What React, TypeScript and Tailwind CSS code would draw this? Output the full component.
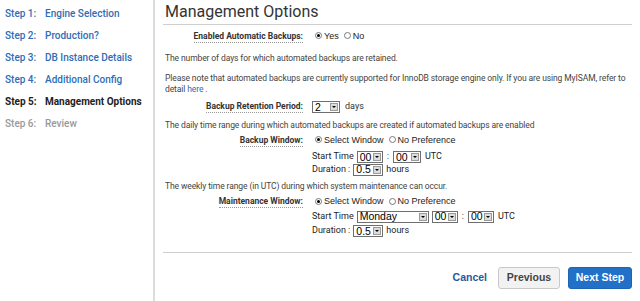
import React from "react";

const roboto = { fontFamily: "Roboto, 'Liberation Sans', sans-serif" };

function Sel({ v, cls }: { v: string; cls: string }) {
  return (
    <span className={"inline-flex items-center h-[12px] border border-[#6f6f6f] bg-white " + cls}>
      <span className="flex-1 pl-[2px] text-[10.5px] leading-none text-black font-['Liberation_Sans',sans-serif]">{v}</span>
      <span className="w-[8px] h-[8px] mr-[1px] bg-[#dcdcdc] border border-[#9a9a9a] flex items-center justify-center">
        <span className="w-0 h-0 border-l-[2px] border-r-[2px] border-t-[2px] border-l-transparent border-r-transparent border-t-black" />
      </span>
    </span>
  );
}

function Radio({ on }: { on?: boolean }) {
  return (
    <span className="inline-flex items-center justify-center w-[7px] h-[7px] rounded-full border border-[#7a7a7a] bg-white mb-[2px] shrink-0">
      {on && <span className="w-[3px] h-[3px] rounded-full bg-black" />}
    </span>
  );
}

function Label({ children }: { children: React.ReactNode }) {
  return (
    <div className="flex justify-end">
      <span className="text-[8.5px] font-bold text-[#333] leading-[11px] border-b border-dotted border-[#999]">{children}</span>
    </div>
  );
}

function Radios({ a, b }: { a: string; b: string }) {
  return (
    <div className="flex items-center gap-[2px] text-[9px] text-[#222] font-['Liberation_Sans',sans-serif]">
      <Radio on /> <span>{a}</span>
      <span className="w-[1px]" />
      <Radio /> <span>{b}</span>
    </div>
  );
}

const steps = [
  { n: "Step 1:", t: "Engine Selection", c: "text-[#2f6db5] font-medium" },
  { n: "Step 2:", t: "Production?", c: "text-[#2f6db5] font-medium" },
  { n: "Step 3:", t: "DB Instance Details", c: "text-[#2f6db5] font-medium" },
  { n: "Step 4:", t: "Additional Config", c: "text-[#2f6db5] font-medium" },
  { n: "Step 5:", t: "Management Options", c: "text-[#222] font-bold" },
  { n: "Step 6:", t: "Review", c: "text-[#999] font-medium" },
];

export default function App() {
  return (
    <div className="w-[640px] h-[301px] flex bg-white overflow-hidden" style={roboto}>
      <div className="w-[155px] shrink-0 border-r-[2px] border-[#dcdcdc] pt-[2px]">
        {steps.map((s) => (
          <div key={s.n} className={"h-[22px] flex items-center pl-[5px] text-[10px] " + s.c}>
            <span className="w-[40px]">{s.n}</span>
            <span>{s.t}</span>
          </div>
        ))}
      </div>
      <div className="flex-1 min-w-0 overflow-hidden flex flex-col pl-[8px] pr-[8px] text-[8.5px] tracking-[-0.1px] text-[#444]">
        <div className="h-[25px] border-b border-[#cfcfcf] pl-[2px] flex items-center tracking-normal">
          <span className="text-[16px] text-[#333] leading-none">Management Options</span>
        </div>
        <div className="h-[23px] grid grid-cols-[140px_1fr] gap-x-[12px] items-center tracking-normal">
          <Label>Enabled Automatic Backups:</Label>
          <Radios a="Yes" b="No" />
        </div>
        <div className="h-[20px] flex items-center pl-[2px]">
          The number of days for which automated backups are retained.
        </div>
        <div className="h-[28px] pt-[5px] pl-[2px] leading-[11px]">
          <div className="whitespace-nowrap">
            Please note that automated backups are currently supported for InnoDB storage engine only. If you are using MyISAM, refer to
          </div>
          <div>
            detail <span className="text-[#2f6db5]">here</span> .
          </div>
        </div>
        <div className="h-[22px] grid grid-cols-[140px_1fr] gap-x-[9px] items-center tracking-normal">
          <Label>Backup Retention Period:</Label>
          <div className="flex items-center gap-[5px] text-[9px] text-[#333]">
            <Sel v="2" cls="w-[28px]" />
            <span>days</span>
          </div>
        </div>
        <div className="h-[13px] flex items-center pl-[2px] pt-[1px]">
          The daily time range during which automated backups are created if automated backups are enabled
        </div>
        <div className="h-[19px] grid grid-cols-[140px_1fr] gap-x-[12px] items-center tracking-normal">
          <Label>Backup Window:</Label>
          <Radios a="Select Window" b="No Preference" />
        </div>
        <div className="h-[12px] grid grid-cols-[140px_1fr] gap-x-[9px] items-center tracking-normal">
          <div />
          <div className="flex items-center gap-[3px] text-[9px] text-[#222]">
            <span>Start Time</span>
            <Sel v="00" cls="w-[26px]" />
            <span className="px-[1px]">:</span>
            <Sel v="00" cls="w-[28px]" />
            <span className="ml-[1px]">UTC</span>
          </div>
        </div>
        <div className="h-[15px] grid grid-cols-[140px_1fr] gap-x-[9px] items-center tracking-normal">
          <div />
          <div className="flex items-center gap-[3px] text-[9px] text-[#222]">
            <span>Duration :</span>
            <Sel v="0.5" cls="w-[30px]" />
            <span>hours</span>
          </div>
        </div>
        <div className="h-[18px] flex items-center pl-[2px]">
          The weekly time range (in UTC) during which system maintenance can occur.
        </div>
        <div className="h-[14px] grid grid-cols-[140px_1fr] gap-x-[12px] items-center tracking-normal">
          <Label>Maintenance Window:</Label>
          <Radios a="Select Window" b="No Preference" />
        </div>
        <div className="h-[15px] grid grid-cols-[140px_1fr] gap-x-[9px] items-center tracking-normal">
          <div />
          <div className="flex items-center gap-[3px] text-[9px] text-[#222]">
            <span>Start Time</span>
            <Sel v="Monday" cls="w-[72px]" />
            <Sel v="00" cls="w-[26px]" />
            <span className="px-[1px]">:</span>
            <Sel v="00" cls="w-[26px]" />
            <span className="ml-[1px]">UTC</span>
          </div>
        </div>
        <div className="h-[12px] grid grid-cols-[140px_1fr] gap-x-[9px] items-center tracking-normal">
          <div />
          <div className="flex items-center gap-[3px] text-[9px] text-[#222]">
            <span>Duration :</span>
            <Sel v="0.5" cls="w-[30px]" />
            <span>hours</span>
          </div>
        </div>
        <div className="h-[17px] border-b border-[#cfcfcf]" />
        <div className="flex justify-end items-center pt-[14px] font-['Liberation_Sans',sans-serif] text-[10.5px] font-bold tracking-normal">
          <span className="text-[#1f5a9e] mr-[11px]">Cancel</span>
          <button className="h-[22px] w-[62px] rounded-[3px] border border-[#c8c8c8] bg-[#f2f2f2] text-[#444] mr-[8px]">Previous</button>
          <button className="h-[22px] w-[64px] rounded-[3px] border border-[#1b64b8] bg-[#2370c8] text-white">Next Step</button>
        </div>
      </div>
    </div>
  );
}
